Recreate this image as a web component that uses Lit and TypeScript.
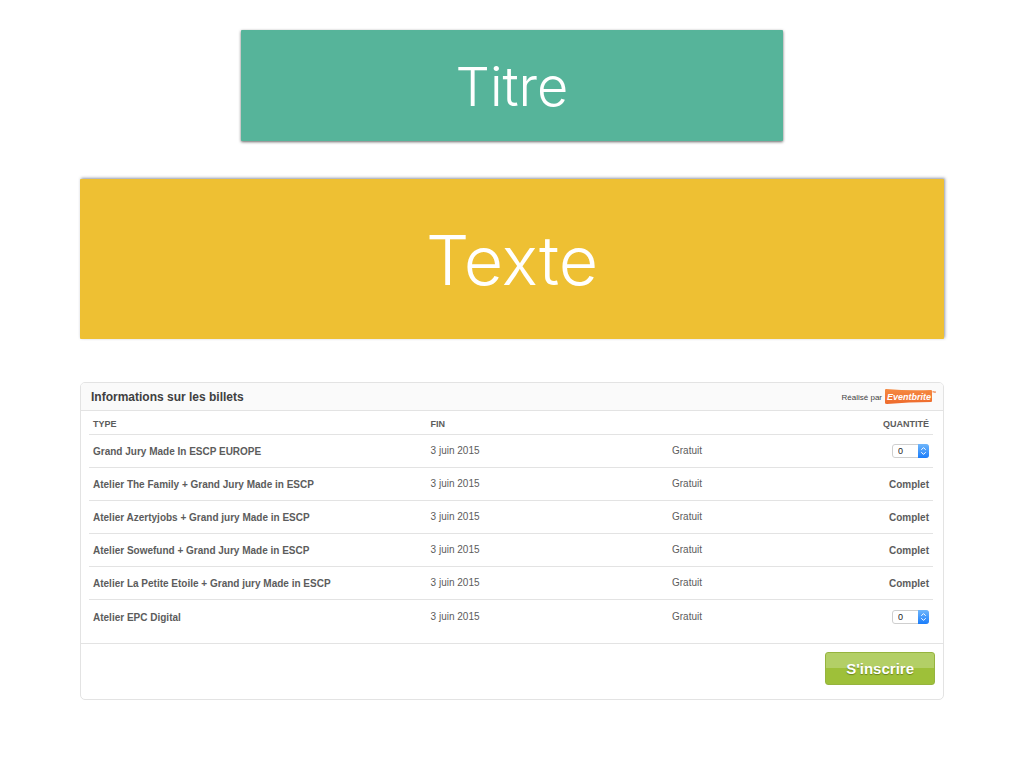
import { LitElement, html, css, svg, nothing } from "lit";
import { customElement, property } from "lit/decorators.js";

interface Ticket {
  name: string;
  end: string;
  price: string;
  available: boolean;
}

const TICKETS: Ticket[] = [
  { name: "Grand Jury Made In ESCP EUROPE", end: "3 juin 2015", price: "Gratuit", available: true },
  { name: "Atelier The Family + Grand Jury Made in ESCP", end: "3 juin 2015", price: "Gratuit", available: false },
  { name: "Atelier Azertyjobs + Grand jury Made in ESCP", end: "3 juin 2015", price: "Gratuit", available: false },
  { name: "Atelier Sowefund + Grand Jury Made in ESCP", end: "3 juin 2015", price: "Gratuit", available: false },
  { name: "Atelier La Petite Etoile + Grand jury Made in ESCP", end: "3 juin 2015", price: "Gratuit", available: false },
  { name: "Atelier EPC Digital", end: "3 juin 2015", price: "Gratuit", available: true },
];

@customElement("quantity-select")
export class QuantitySelect extends LitElement {
  @property() label = "";

  static styles = css`
    :host {
      display: inline-block;
      vertical-align: middle;
    }
    .box {
      display: flex;
      width: 37px;
      height: 14px;
      position: relative;
    }
    .field {
      appearance: none;
      box-sizing: border-box;
      width: 100%;
      height: 100%;
      margin: 0;
      padding: 0 12px 0 5px;
      border: 1px solid #cfcfcf;
      border-radius: 3px;
      background: #fff;
      color: #222;
      font: 9px/12px "Liberation Sans", Arial, sans-serif;
    }
    .arrows {
      position: absolute;
      top: 0;
      right: 0;
      width: 11px;
      height: 14px;
      pointer-events: none;
    }
  `;

  render() {
    return html`<div class="box">
      <select class="field" aria-label=${this.label}>
        ${[0, 1, 2, 3, 4, 5].map((n) => html`<option>${n}</option>`)}
      </select>
      <svg class="arrows" viewBox="0 0 11 14" aria-hidden="true">
        <defs>
          <linearGradient id="blue" x1="0" y1="0" x2="0" y2="1">
            <stop offset="0" stop-color="#6fb6fb" />
            <stop offset="1" stop-color="#1a7dfb" />
          </linearGradient>
        </defs>
        <path d="M0 0H8Q11 0 11 3V11Q11 14 8 14H0Z" fill="url(#blue)" />
        <path d="M3.3 5.8L5.5 3.6L7.7 5.8M3.3 8.2L5.5 10.4L7.7 8.2" fill="none" stroke="#fff" stroke-width="1" />
      </svg>
    </div>`;
  }
}

@customElement("ticket-panel")
export class TicketPanel extends LitElement {
  static styles = css`
    :host {
      display: block;
      font-family: "Liberation Sans", Arial, sans-serif;
      color: #5c5c5c;
    }
    .panel {
      border: 1px solid #e3e3e3;
      border-radius: 5px;
      background: #fff;
      overflow: hidden;
    }
    .head {
      display: flex;
      align-items: center;
      justify-content: space-between;
      height: 27px;
      padding: 0 7px 0 10px;
      border-bottom: 1px solid #e3e3e3;
      background: #fafafa;
    }
    .title {
      margin: 0;
      font-size: 12px;
      line-height: 16px;
      font-weight: 700;
      color: #404040;
    }
    .credit {
      display: flex;
      align-items: center;
      gap: 3px;
      font-size: 8px;
      line-height: 12px;
      color: #444;
    }
    .by {
      padding-top: 2px;
    }
    .brand {
      display: block;
      width: 51px;
      height: 16px;
    }
    .body {
      padding: 0 10px 10px 8px;
    }
    .grid {
      width: 100%;
      border-collapse: separate;
      border-spacing: 0;
      table-layout: fixed;
    }
    .type { width: 40%; }
    .end { width: 28.6%; }
    .qty { width: 10%; }
    th, td {
      box-sizing: border-box;
      padding: 0 4px;
      height: 33px;
      font-size: 10px;
      line-height: 14px;
      text-align: left;
      white-space: nowrap;
      vertical-align: middle;
      border-bottom: 1px solid #e3e3e3;
    }
    tbody th, .sold {
      padding-top: 2px;
    }
    thead th {
      height: 24px;
      padding-top: 2px;
      font-size: 9px;
    }
    tbody tr:last-child > * {
      border-bottom: 0;
    }
    .right {
      text-align: right;
    }
    .sold {
      font-weight: 700;
    }
    .foot {
      display: flex;
      justify-content: flex-end;
      padding: 8px 8px 14px;
      border-top: 1px solid #e3e3e3;
    }
    .submit {
      box-sizing: border-box;
      height: 33px;
      padding: 1px 20px 0;
      border: 1px solid #96b43e;
      border-radius: 3px;
      background: linear-gradient(#b3cf66 0 50%, #9ec039 50% 100%);
      color: #fff;
      font: 700 15px/20px "Liberation Sans", Arial, sans-serif;
      text-shadow: 0 1px 1px rgba(70, 90, 10, 0.6);
    }
  `;

  private brand() {
    return html`<svg class="brand" viewBox="0 0 51 16" role="img" aria-label="Eventbrite">
      ${svg`<defs>
        <linearGradient id="orange" x1="0" y1="0" x2="0" y2="1">
          <stop offset="0" stop-color="#f58a42" />
          <stop offset="1" stop-color="#ee6a2c" />
        </linearGradient>
      </defs>
      <path d="M1 0Q24 2 46 1Q47 1 47 2V12Q47 13 46 13Q24 13 2 15Q0 15 0 14V1Q0 0 1 0Z" fill="url(#orange)" />
      <text x="2" y="11" font-size="9" font-weight="700" font-style="italic" fill="#fff"
        font-family="Liberation Sans, Arial, sans-serif">Eventbrite</text>
      <path d="M47.5 2.5H49M48.2 2.5V4M49.5 4V2.5L50 3.2L50.6 2.5V4" fill="none" stroke="#ee7a3c" stroke-width="0.6" />`}
    </svg>`;
  }

  render() {
    return html`<section class="panel">
      <header class="head">
        <h2 class="title">Informations sur les billets</h2>
        <div class="credit"><span class="by">Réalisé par</span>${this.brand()}</div>
      </header>
      <div class="body">
        <table class="grid">
          <colgroup>
            <col class="type" /><col class="end" /><col /><col class="qty" />
          </colgroup>
          <thead>
            <tr>
              <th scope="col">TYPE</th>
              <th scope="col">FIN</th>
              <th>${nothing}</th>
              <th scope="col" class="right">QUANTITÉ</th>
            </tr>
          </thead>
          <tbody>
            ${TICKETS.map(
              (t) => html`<tr>
                <th scope="row">${t.name}</th>
                <td>${t.end}</td>
                <td>${t.price}</td>
                <td class=${t.available ? "right" : "right sold"}>
                  ${t.available ? html`<quantity-select .label=${t.name}></quantity-select>` : "Complet"}
                </td>
              </tr>`
            )}
          </tbody>
        </table>
      </div>
      <footer class="foot"><button class="submit" type="button">S'inscrire</button></footer>
    </section>`;
  }
}

@customElement("app-root")
export class AppRoot extends LitElement {
  static styles = css`
    :host {
      display: block;
      min-height: 100vh;
      background: #fff;
    }
    .page {
      display: flex;
      flex-direction: column;
      align-items: center;
      padding: 30px 80px 68px;
    }
    .banner {
      box-sizing: border-box;
      display: flex;
      align-items: center;
      justify-content: center;
      margin: 0;
      border-radius: 1px;
      color: #fff;
      font-family: Inter, "Liberation Sans", sans-serif;
      font-weight: 300;
    }
    .titre {
      width: 62.8%;
      padding: 22px 0 19px;
      background: #56b49a;
      font-size: 54px;
      line-height: 70px;
      box-shadow: 0 1px 3px rgba(0, 0, 0, 0.6);
    }
    .texte {
      width: 100%;
      margin-top: 38px;
      padding: 41px 0 39px;
      background: #eec033;
      font-size: 68px;
      line-height: 80px;
      box-shadow: 1px -1px 3px rgba(40, 50, 80, 0.5);
    }
    .tickets {
      width: 100%;
      margin-top: 43px;
    }
  `;

  render() {
    return html`<main class="page">
      <h1 class="banner titre">Titre</h1>
      <p class="banner texte">Texte</p>
      <ticket-panel class="tickets"></ticket-panel>
    </main>`;
  }
}
